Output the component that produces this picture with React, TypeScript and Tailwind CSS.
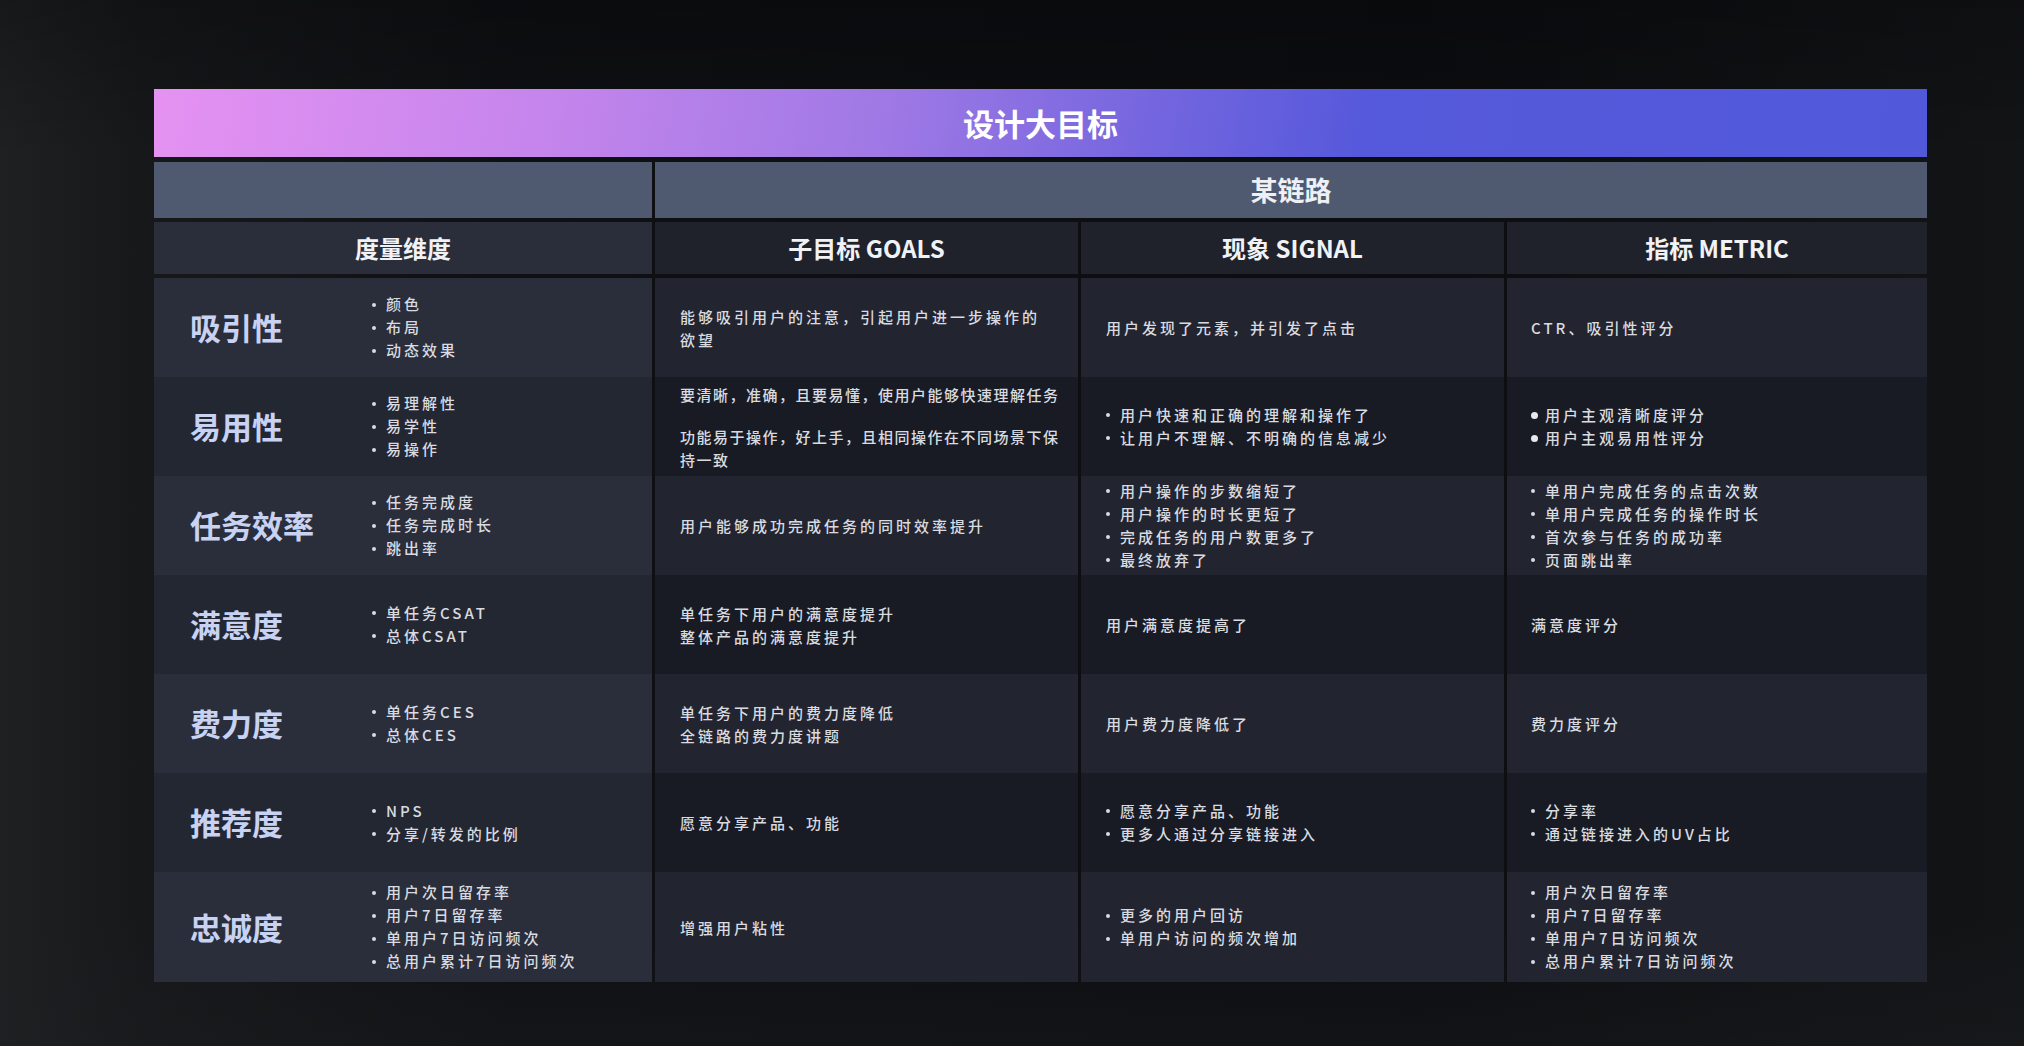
import React from 'react';

type Cell = {
  lines?: string[];
  paras?: string[][];
  list?: string[];
  big?: boolean;
  tight?: boolean;
};

type Row = {
  label: string;
  dims: string[];
  goals: Cell;
  signal: Cell;
  metric: Cell;
};

const rows: Row[] = [
  {
    label: '吸引性',
    dims: ['颜色', '布局', '动态效果'],
    goals: { lines: ['能够吸引用户的注意，引起用户进一步操作的', '欲望'] },
    signal: { lines: ['用户发现了元素，并引发了点击'] },
    metric: { lines: ['CTR、吸引性评分'] },
  },
  {
    label: '易用性',
    dims: ['易理解性', '易学性', '易操作'],
    goals: {
      tight: true,
      paras: [['要清晰，准确，且要易懂，使用户能够快速理解任务'], ['功能易于操作，好上手，且相同操作在不同场景下保', '持一致']],
    },
    signal: { list: ['用户快速和正确的理解和操作了', '让用户不理解、不明确的信息减少'] },
    metric: { list: ['用户主观清晰度评分', '用户主观易用性评分'], big: true },
  },
  {
    label: '任务效率',
    dims: ['任务完成度', '任务完成时长', '跳出率'],
    goals: { lines: ['用户能够成功完成任务的同时效率提升'] },
    signal: { list: ['用户操作的步数缩短了', '用户操作的时长更短了', '完成任务的用户数更多了', '最终放弃了'] },
    metric: { list: ['单用户完成任务的点击次数', '单用户完成任务的操作时长', '首次参与任务的成功率', '页面跳出率'] },
  },
  {
    label: '满意度',
    dims: ['单任务CSAT', '总体CSAT'],
    goals: { lines: ['单任务下用户的满意度提升', '整体产品的满意度提升'] },
    signal: { lines: ['用户满意度提高了'] },
    metric: { lines: ['满意度评分'] },
  },
  {
    label: '费力度',
    dims: ['单任务CES', '总体CES'],
    goals: { lines: ['单任务下用户的费力度降低', '全链路的费力度讲题'] },
    signal: { lines: ['用户费力度降低了'] },
    metric: { lines: ['费力度评分'] },
  },
  {
    label: '推荐度',
    dims: ['NPS', '分享/转发的比例'],
    goals: { lines: ['愿意分享产品、功能'] },
    signal: { list: ['愿意分享产品、功能', '更多人通过分享链接进入'] },
    metric: { list: ['分享率', '通过链接进入的UV占比'] },
  },
  {
    label: '忠诚度',
    dims: ['用户次日留存率', '用户7日留存率', '单用户7日访问频次', '总用户累计7日访问频次'],
    goals: { lines: ['增强用户粘性'] },
    signal: { list: ['更多的用户回访', '单用户访问的频次增加'] },
    metric: { list: ['用户次日留存率', '用户7日留存率', '单用户7日访问频次', '总用户累计7日访问频次'] },
  },
];

function Bullets({ items, big }: { items: string[]; big?: boolean }) {
  return (
    <ul className="flex flex-col">
      {items.map((t) => (
        <li key={t} className="flex h-[23px] items-center">
          <span
            className={
              big
                ? 'mr-[7px] h-[7px] w-[7px] shrink-0 rounded-full bg-[#e6e8ec]'
                : 'mr-[10px] h-[4px] w-[4px] shrink-0 rounded-full bg-[#d9dbe0]'
            }
          />
          <span>{t}</span>
        </li>
      ))}
    </ul>
  );
}

function Body({ cell }: { cell: Cell }) {
  if (cell.list) return <Bullets items={cell.list} big={cell.big} />;
  if (cell.paras)
    return (
      <div className="flex flex-col gap-[19px]">
        {cell.paras.map((p, i) => (
          <div key={i}>
            {p.map((l) => (
              <div key={l} className="h-[23px] leading-[23px]">
                {l}
              </div>
            ))}
          </div>
        ))}
      </div>
    );
  return (
    <div>
      {cell.lines?.map((l) => (
        <div key={l} className="h-[23px] leading-[23px] whitespace-nowrap">
          {l}
        </div>
      ))}
    </div>
  );
}

export default function App() {
  return (
    <div className="h-[1046px] w-full overflow-hidden bg-[linear-gradient(90deg,#1f2022_0%,#17181a_7%,#0f1013_25%,#0c0d10_70%,#131416_100%)] font-['Noto_Sans_CJK_SC','Noto_Sans',sans-serif]">
      <div className="flex h-full w-full bg-[linear-gradient(180deg,rgba(0,0,0,0.25)_0%,rgba(0,0,0,0)_15%,rgba(0,0,0,0)_88%,rgba(30,31,34,0.35)_100%)] pl-[154px] pt-[89px]">
        <div className="flex h-fit w-[1773px] flex-col">
          {/* title */}
          <div className="flex h-[68px] items-center justify-center bg-[linear-gradient(100deg,#e592f2_0%,#c585ec_22%,#9d78e5_42%,#7566df_56%,#5659db_68%,#5159da_100%)]">
            <span className="text-[31px] font-bold text-white">设计大目标</span>
          </div>

          {/* chain row */}
          <div className="mt-[5px] grid h-[56px] grid-cols-[498px_1fr] gap-x-[3px]">
            <div className="bg-[#4f5a70]" />
            <div className="flex items-center justify-center bg-[#4f5a70] text-[27px] font-bold text-[#eef0f5]">某链路</div>
          </div>

          {/* column headers */}
          <div className="mt-[4px] grid h-[52px] grid-cols-[498px_423px_423px_1fr] gap-x-[3px] text-[24px] font-bold text-[#f1f2f5]">
            <div className="flex items-center justify-center bg-[#292e3a]">度量维度</div>
            <div className="flex items-center justify-center bg-[#1f222b]">子目标 GOALS</div>
            <div className="flex items-center justify-center bg-[#1f222b]">现象 SIGNAL</div>
            <div className="flex items-center justify-center bg-[#1f222b]">指标 METRIC</div>
          </div>

          {/* body */}
          <div className="mt-[4px] flex flex-col text-[15px] font-medium tracking-[3px] text-[#d9dbe0]">
            {rows.map((r, i) => {
              const light = i % 2 === 0;
              const first = light ? 'bg-[#2a2e3a]' : 'bg-[#232732]';
              const rest = light ? 'bg-[#22252f]' : 'bg-[#181b23]';
              return (
                <div
                  key={r.label}
                  className={`grid grid-cols-[498px_423px_423px_1fr] gap-x-[3px] ${
                    i === rows.length - 1 ? 'h-[110px]' : 'h-[99px]'
                  }`}
                >
                  <div className={`flex items-center pl-[36px] ${first}`}>
                    <div className="w-[182px] text-[31px] font-bold tracking-normal text-[#c8d2f2]">{r.label}</div>
                    <Bullets items={r.dims} />
                  </div>
                  <div className={`flex items-center pl-[25px] ${rest} ${r.goals.tight ? 'tracking-[1.5px]' : ''}`}>
                    <Body cell={r.goals} />
                  </div>
                  <div className={`flex items-center pl-[25px] ${rest}`}>
                    <Body cell={r.signal} />
                  </div>
                  <div className={`flex items-center pl-[24px] ${rest}`}>
                    <Body cell={r.metric} />
                  </div>
                </div>
              );
            })}
          </div>
        </div>
      </div>
    </div>
  );
}
